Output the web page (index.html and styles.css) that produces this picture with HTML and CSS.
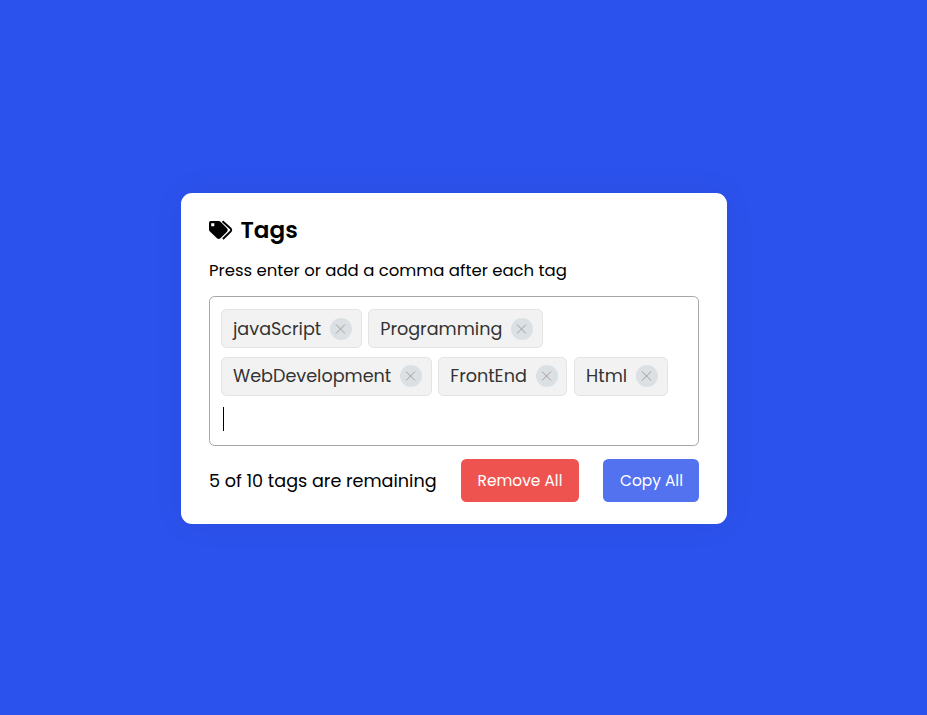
FILE: index.html
```html
<!DOCTYPE html>
<html lang="en">
<head>
<meta charset="utf-8">
<title>Tags</title>
<link rel="stylesheet" href="styles.css">
</head>
<body>
<svg class="defs" aria-hidden="true"><symbol id="x" viewBox="0 0 22 22"><path d="M6 6.5l9 9M15 6.5l-9 9"/></symbol></svg>
<main class="card">
  <header class="title">
    <svg class="icon" viewBox="0 0 24 20"><path fill-rule="evenodd" d="M1.8 1H9.6Q10.7 1 11.5 1.8L18 8.3Q19.6 10 18 11.7L11.4 18.3Q9.7 19.8 8 18.3L.9 11.5Q0 10.7 0 9.5V2.8Q0 1 1.8 1ZM2.2 3.2V6.3H5.3V3.2Z"/><path class="edge" d="M13.5 1.2l7.8 7q1.9 1.8 0 3.6l-7.4 7.2"/></svg>
    <h2>Tags</h2>
  </header>
  <p class="hint">Press enter or add a comma after each tag</p>
  <ul class="tags">
    <li class="tag"><span>javaScript</span><svg class="close"><use href="#x"/></svg></li>
    <li class="tag"><span>Programming</span><svg class="close cool"><use href="#x"/></svg></li>
    <li class="tag low"><span>WebDevelopment</span><svg class="close"><use href="#x"/></svg></li>
    <li class="tag low narrow"><span>FrontEnd</span><svg class="close"><use href="#x"/></svg></li>
    <li class="tag low"><span>Html</span><svg class="close"><use href="#x"/></svg></li>
    <li class="entry"><i class="caret"></i></li>
  </ul>
  <footer class="details">
    <p class="count">5 of 10 tags are remaining</p>
    <button class="remove">Remove All</button>
    <button class="copy">Copy All</button>
  </footer>
</main>
</body>
</html>
```
FILE: styles.css
```css
* { box-sizing: border-box; margin: 0; padding: 0; }
body { min-height: 715px; padding: 193px 0 0 181px; background: #2c52ed; font-family: Poppins, Inter, sans-serif; color: #000; }
.defs { display: none; }
.card { width: 546px; height: 331px; padding: 18px 28px 0; border-radius: 11px; background: #fff; box-shadow: 0 0 33px rgba(0, 0, 0, .06); }
.title { display: flex; align-items: center; height: 38px; gap: 7.5px; }
.icon { width: 24px; height: 20px; }
.edge { fill: none; stroke: #000; stroke-width: 1.9; }
h2 { font-size: 23.1px; font-weight: 600; line-height: 38px; white-space: nowrap; }
.hint { margin-top: 9px; height: 25px; font-size: 16.5px; line-height: 26px; white-space: nowrap; }
.tags { display: flex; flex-wrap: wrap; align-content: flex-start; gap: 9px 6.2px; height: 150px; margin-top: 13px; padding: 12px 11px; border: 1px solid #a6a6a6; border-radius: 5.5px; list-style: none; }
.tag { display: flex; align-items: center; gap: 8.8px; height: 39px; padding: 0 9px 0 11px; border: 1px solid #e3e3e3; border-radius: 5.5px; background: #f2f2f2; color: #333; font-size: 17.6px; line-height: 37px; white-space: nowrap; }
.tag span { padding-top: 2px; line-height: 35px; }
.low { padding-bottom: 1px; }
.low span { padding-top: 0; line-height: 37px; }
.narrow { width: 129px; margin-right: .6px; }
.close { flex: none; width: 22px; height: 22px; border-radius: 50%; background: #dae0e3; fill: none; stroke: #a89c98; stroke-width: 1; }
.cool { stroke: #96a2ae; }
.entry { flex: 0 0 100%; height: 29px; padding: 2px; }
.caret { display: block; width: 1px; height: 24px; background: #000; }
.details { display: flex; align-items: center; height: 43px; margin-top: 13px; }
.count { width: 252px; font-size: 17.6px; white-space: nowrap; }
button { height: 43px; border: 0; border-radius: 5.5px; color: #fff; font: 400 15.4px Poppins, Inter, sans-serif; white-space: nowrap; }
.remove { width: 118px; background: #ef5350; }
.copy { width: 96px; margin-left: 24px; padding-left: 1px; background: #5372f0; }
```
